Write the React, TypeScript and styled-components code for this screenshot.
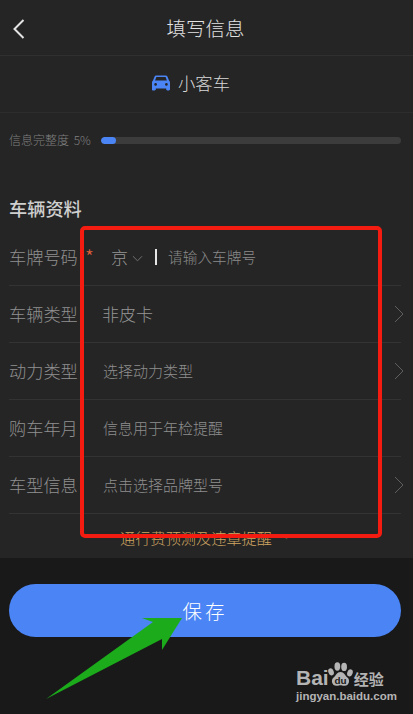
import React from "react";
import styled, { createGlobalStyle } from "styled-components";

const fields = [
  { label: "车辆类型", value: "非皮卡", large: true, arrow: true },
  { label: "动力类型", value: "选择动力类型", arrow: true },
  { label: "购车年月", value: "信息用于年检提醒" },
  { label: "车型信息", value: "点击选择品牌型号", arrow: true },
];

const App: React.FC = () => {
  return (
    <Page>
      <GlobalStyle />
      <Panel>
        <Header>
          <BackIcon viewBox="0 0 14 22">
            <path d="M11.5 2 L2.5 11 L11.5 20" />
          </BackIcon>
          <HeaderTitle>填写信息</HeaderTitle>
        </Header>
        <VehicleRow>
          <CarIcon viewBox="0 0 18 16">
            <path d="M4.2 0.5h9.6c.7 0 1.3.4 1.6 1l1.6 4.1c.6.4 1 1 1 1.8v6.9c0 .6-.5 1.1-1.1 1.1h-1.6c-.6 0-1.1-.5-1.1-1.1v-.7H3.8v.7c0 .6-.5 1.1-1.1 1.1H1.1C.5 15.500 0 15 0 14.400V7.400c0-.8.4-1.400 1-1.800l1.600-4.100c.3-.6.9-1 1.600-1z" />
            <path fill="#252525" d="M4.400 2h9.200l1.300 3.500H3.100z" />
            <circle fill="#252525" cx="3.600" cy="9.400" r="1.300" />
            <circle fill="#252525" cx="14.400" cy="9.400" r="1.300" />
          </CarIcon>
          <VehicleName>小客车</VehicleName>
        </VehicleRow>
        <Progress>
          <ProgressLabel>信息完整度 5%</ProgressLabel>
          <ProgressTrack>
            <ProgressBar style={{ width: "5%" }} />
          </ProgressTrack>
        </Progress>
        <SectionTitle>车辆资料</SectionTitle>
        <Fields>
          <FieldRow>
            <Label>车牌号码</Label>
            <Required>*</Required>
            <PlateCity>京</PlateCity>
            <SmallChevron viewBox="0 0 12 7">
              <path d="M1 1 L6 6 L11 1" />
            </SmallChevron>
            <Cursor />
            <PlateInput>请输入车牌号</PlateInput>
          </FieldRow>
          {fields.map((field) => (
            <FieldRow key={field.label}>
              <Label>{field.label}</Label>
              <Value $large={field.large}>{field.value}</Value>
              {field.arrow && (
                <RowArrow viewBox="0 0 10 18">
                  <path d="M1 1 L9 9 L1 17" />
                </RowArrow>
              )}
            </FieldRow>
          ))}
        </Fields>
        <More>
          <MoreText>通行费预测及违章提醒</MoreText>
          <MoreChevron viewBox="0 0 12 7">
            <path d="M1 1 L6 6 L11 1" />
          </MoreChevron>
        </More>
      </Panel>
      <Footer>
        <SaveButton>保存</SaveButton>
      </Footer>

      <RedBox />
      <GreenArrow viewBox="0 0 413 714">
        <polygon points="182,618 142,618 153,622 46,699 162,639 162,650" />
      </GreenArrow>
      <Watermark>
        <LogoLine>
          <LogoLatin>Bai</LogoLatin>
          <Paw viewBox="0 0 30 30">
            <ellipse cx="4.500" cy="11" rx="3" ry="4" transform="rotate(-20 4.500 11)" />
            <ellipse cx="11.500" cy="5" rx="3.200" ry="4.600" />
            <ellipse cx="19" cy="5.500" rx="3.200" ry="4.600" />
            <ellipse cx="25.500" cy="12" rx="3" ry="4" transform="rotate(20 25.500 12)" />
            <path d="M15 11c4 0 5 4 8 6.500 3 2.500 1.500 9.500-4 9-2-.2-2.700-.8-4-.8s-2.200.6-4 .8c-5.500.5-7-6.500-4-9C10 15 11 11 15 11z" />
            <PawText x="15" y="24.500">du</PawText>
          </Paw>
          <LogoChinese>经验</LogoChinese>
        </LogoLine>
        <LogoUrl>jingyan.baidu.com</LogoUrl>
      </Watermark>
    </Page>
  );
};

const GlobalStyle = createGlobalStyle`
  html, body {
    margin: 0;
    padding: 0;
    background: #191919;
  }
  * {
    box-sizing: border-box;
  }
`;

const Page = styled.div`
  position: relative;
  width: 413px;
  height: 714px;
  overflow: hidden;
  background: #191919;
  font-family: "Noto Sans CJK SC", "Noto Sans", sans-serif;
  font-weight: 300;
`;

const Panel = styled.div`
  height: 558px;
  background: #252525;
  display: flex;
  flex-direction: column;
`;

const Header = styled.div`
  position: relative;
  height: 56px;
  flex: none;
  display: flex;
  align-items: center;
  justify-content: center;
  border-bottom: 1px solid #303030;
`;

const BackIcon = styled.svg`
  position: absolute;
  left: 12px;
  top: 18px;
  width: 14px;
  height: 22px;
  fill: none;
  stroke: #e4e4e4;
  stroke-width: 2;
`;

const HeaderTitle = styled.div`
  font-size: 19.500px;
  line-height: 24px;
  color: #e2e2e2;
  margin-top: 1px;
  margin-left: -2px;
`;

const VehicleRow = styled.div`
  height: 57px;
  flex: none;
  display: flex;
  align-items: center;
  justify-content: center;
  gap: 8px;
  padding: 0 31px 2px 0;
  border-bottom: 1px solid #2d2d2d;
`;

const CarIcon = styled.svg`
  width: 18px;
  height: 16px;
  fill: #4a84f5;
`;

const VehicleName = styled.div`
  font-size: 17.300px;
  line-height: 22px;
  color: #d8d8d8;
`;

const Progress = styled.div`
  height: 54px;
  flex: none;
  display: flex;
  align-items: center;
  gap: 10px;
  padding: 0 12px 0 9px;
`;

const ProgressLabel = styled.div`
  font-size: 12px;
  line-height: 16px;
  word-spacing: 2px;
  color: #808080;
  white-space: nowrap;
`;

const ProgressTrack = styled.div`
  flex: 1;
  height: 7px;
  border-radius: 4px;
  background: #3c3c3c;
  overflow: hidden;
`;

const ProgressBar = styled.div`
  height: 100%;
  border-radius: 4px;
  background: #4a84f5;
`;

const SectionTitle = styled.div`
  height: 62px;
  flex: none;
  padding: 29px 9px 0;
  font-size: 18.200px;
  line-height: 24px;
  font-weight: 500;
  color: #cfcfcf;
`;

const Fields = styled.div`
  padding: 0 12px 0 9px;
  flex: none;
`;

const FieldRow = styled.div`
  height: 57px;
  display: flex;
  align-items: center;
  border-bottom: 1px solid #333;
`;

const Label = styled.div`
  width: 94px;
  flex: none;
  font-size: 17.200px;
  line-height: 22px;
  color: #909090;
  white-space: nowrap;
`;

const Required = styled.span`
  margin-left: -18px;
  width: 25px;
  flex: none;
  font-size: 20px;
  line-height: 24px;
  color: #e0613a;
`;

const PlateCity = styled.span`
  font-size: 17px;
  line-height: 22px;
  color: #959595;
  margin-left: 1px;
`;

const SmallChevron = styled.svg`
  width: 11px;
  height: 7px;
  margin: 3px 0 0 4px;
  fill: none;
  stroke: #777;
  stroke-width: 1;
`;

const Cursor = styled.span`
  width: 2px;
  height: 16px;
  margin: 0 11px 0 12px;
  background: #e6e6e6;
`;

const PlateInput = styled.span`
  font-size: 14.700px;
  line-height: 20px;
  color: #8a8a8a;
`;

const Value = styled.div<{ $large?: boolean }>`
  flex: 1;
  font-size: ${(props) => (props.$large ? "17px" : "15px")};
  line-height: 22px;
  color: ${(props) => (props.$large ? "#959595" : "#8e8e8e")};
  white-space: nowrap;
  margin-left: ${(props) => (props.$large ? "-1px" : "0")};
`;

const RowArrow = styled.svg`
  width: 10px;
  height: 18px;
  margin: 0 -3px 0 0;
  fill: none;
  stroke: #5f5f5f;
  stroke-width: 1;
`;

const More = styled.div`
  flex: 1;
  display: flex;
  align-items: center;
  justify-content: center;
  gap: 9px;
  padding: 0 1px 0 0;
`;

const MoreText = styled.div`
  font-size: 15.200px;
  line-height: 20px;
  color: #d0a662;
  white-space: nowrap;
  margin-top: 1px;
`;

const MoreChevron = styled.svg`
  width: 11px;
  height: 7px;
  fill: none;
  stroke: #6e6353;
  stroke-width: 1;
`;

const Footer = styled.div`
  height: 156px;
  padding: 26px 12px 0 9px;
`;

const SaveButton = styled.button`
  display: block;
  width: 100%;
  height: 53px;
  border: none;
  border-radius: 27px;
  background: #4a84f5;
  color: #fff;
  font-family: inherit;
  font-weight: 300;
  font-size: 19.500px;
  letter-spacing: 3px;
  padding: 0;
`;

const RedBox = styled.div`
  position: absolute;
  left: 80px;
  top: 226px;
  width: 302px;
  height: 312px;
  border: 4px solid #f41c10;
  border-radius: 5px;
  pointer-events: none;
`;

const GreenArrow = styled.svg`
  position: absolute;
  left: 0;
  top: 0;
  width: 413px;
  height: 714px;
  fill: #1cab1b;
  pointer-events: none;
`;

const Watermark = styled.div`
  position: absolute;
  left: 296px;
  top: 660px;
  width: 92px;
  color: #b4b4b4;
`;

const LogoLine = styled.div`
  display: flex;
  align-items: flex-end;
  height: 29px;
`;

const LogoLatin = styled.span`
  font-family: "Liberation Sans", Arial, sans-serif;
  font-size: 21px;
  line-height: 20px;
  font-weight: 700;
  margin-bottom: 1px;
`;

const Paw = styled.svg`
  width: 27px;
  height: 27px;
  margin-left: -2px;
  fill: #b4b4b4;
`;

const PawText = styled.text`
  font-family: "Liberation Sans", Arial, sans-serif;
  font-size: 11px;
  font-weight: 700;
  fill: #191919;
  text-anchor: middle;
`;

const LogoChinese = styled.span`
  font-size: 15px;
  line-height: 20px;
  font-weight: 700;
  white-space: nowrap;
`;

const LogoUrl = styled.div`
  font-family: "Liberation Sans", Arial, sans-serif;
  font-size: 11.500px;
  line-height: 14px;
  font-weight: 700;
  white-space: nowrap;
`;

export default App;
